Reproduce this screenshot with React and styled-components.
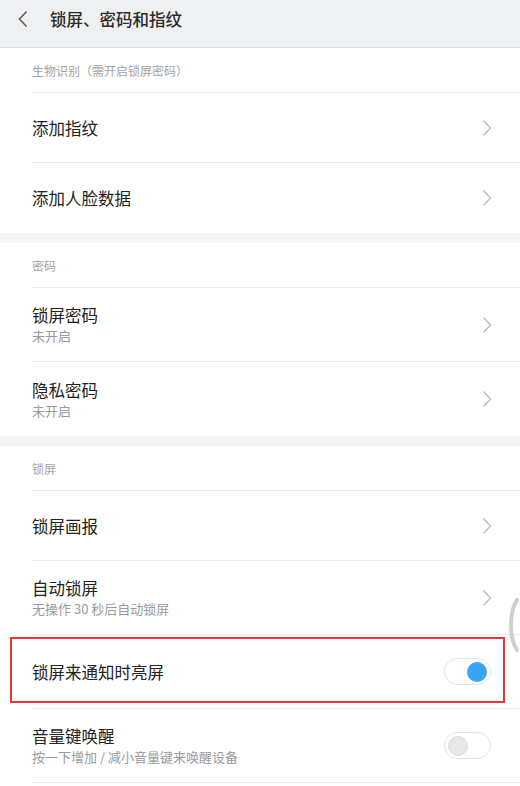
import React from 'react';
import styled, { createGlobalStyle } from 'styled-components';

const GlobalStyle = createGlobalStyle`
  html, body {
    margin: 0;
    padding: 0;
    background: #ffffff;
  }
  body {
    font-family: "Noto Sans CJK SC", "Noto Sans", sans-serif;
    -webkit-font-smoothing: antialiased;
  }
`;

const sections = [
  {
    title: '生物识别（需开启锁屏密码）',
    rows: [
      { label: '添加指纹', kind: 'link' },
      { label: '添加人脸数据', kind: 'link' },
    ],
  },
  {
    title: '密码',
    rows: [
      { label: '锁屏密码', sub: '未开启', kind: 'link' },
      { label: '隐私密码', sub: '未开启', kind: 'link' },
    ],
  },
  {
    title: '锁屏',
    rows: [
      { label: '锁屏画报', kind: 'link' },
      { label: '自动锁屏', sub: '无操作 30 秒后自动锁屏', kind: 'link' },
      { label: '锁屏来通知时亮屏', kind: 'toggle', on: true, tall: true, marked: true },
      { label: '音量键唤醒', sub: '按一下增加 / 减小音量键来唤醒设备', kind: 'toggle', on: false },
    ],
  },
];

const Page = styled.div`
  position: relative;
  width: 520px;
  height: 786px;
  overflow: hidden;
  background: #fff;
`;

const Header = styled.header`
  height: 47px;
  display: flex;
  align-items: center;
  background: #eef0f1;
  border-bottom: 1px solid #dedfe0;
`;

const BackButton = styled.div`
  width: 50px;
  height: 47px;
  display: flex;
  align-items: center;
  justify-content: center;
  padding-right: 4px;
  box-sizing: border-box;
  margin-top: -10px;
`;

const Title = styled.h1`
  margin: -10px 0 0;
  font-size: 16.5px;
  font-weight: 500;
  color: #2b2b2b;
`;

const Section = styled.section`
  & + & {
    border-top: 10px solid #f3f4f5;
  }
`;

const SectionTitle = styled.div`
  height: 45px;
  margin-left: 32px;
  display: flex;
  align-items: center;
  font-size: 12px;
  color: #a3a3a3;
  border-bottom: 1px solid #ececec;
  box-sizing: border-box;
`;

const Row = styled.div`
  position: relative;
  height: ${p => (p.$tall ? 74 : 70)}px;
  margin-left: 32px;
  padding-right: 26px;
  display: flex;
  align-items: center;
  box-sizing: border-box;
  border-bottom: ${p => (p.$last ? 'none' : '1px solid #ececec')};
`;

const Texts = styled.div`
  flex: 1;
  display: flex;
  flex-direction: column;
  justify-content: center;
`;

const Label = styled.div`
  font-size: 16.5px;
  color: #222;
  line-height: 22px;
`;

const Sub = styled.div`
  font-size: 13px;
  color: #9a9a9a;
  line-height: 18px;
  margin-top: 1px;
`;

const Chevron = styled.svg`
  width: 12px;
  height: 18px;
  margin-right: 1px;
`;

const Switch = styled.div`
  width: 47px;
  height: 27px;
  border-radius: 14px;
  border: 1px solid #e2e3e4;
  background: #fff;
  box-sizing: border-box;
  display: flex;
  align-items: center;
  justify-content: ${p => (p.$on ? 'flex-end' : 'flex-start')};
  padding: 0 3px;
  margin-right: 3px;
`;

const Knob = styled.div`
  width: 20px;
  height: 20px;
  border-radius: 50%;
  background: ${p => (p.$on ? '#3aa5f3' : '#e6e7e6')};
  border: ${p => (p.$on ? 'none' : '1px solid #dadbda')};
  box-sizing: border-box;
`;

const Highlight = styled.div`
  position: absolute;
  left: -22px;
  right: 15px;
  top: 2px;
  bottom: 5px;
  border: 2px solid #ee3434;
  pointer-events: none;
`;

const ScrollHint = styled.svg`
  position: absolute;
  right: 0;
  top: 598px;
  width: 14px;
  height: 54px;
`;

function RowItem({ row, last }) {
  return (
    <Row $tall={row.sub || row.tall} $last={last}>
      <Texts>
        <Label>{row.label}</Label>
        {row.sub && <Sub>{row.sub}</Sub>}
      </Texts>
      {row.kind === 'link' ? (
        <Chevron viewBox="0 0 12 18">
          <path d="M2.5 1.5 L9.5 9 L2.5 16.5" fill="none" stroke="#b9b9b9" strokeWidth="1.3" />
        </Chevron>
      ) : (
        <Switch $on={row.on}>
          <Knob $on={row.on} />
        </Switch>
      )}
      {row.marked && <Highlight />}
    </Row>
  );
}

export default function App() {
  return (
    <Page>
      <GlobalStyle />
      <Header>
        <BackButton>
          <svg width="12" height="18" viewBox="0 0 12 18">
            <path d="M9.5 1.5 L2.5 9 L9.5 16.5" fill="none" stroke="#5a5a5a" strokeWidth="1.5" />
          </svg>
        </BackButton>
        <Title>锁屏、密码和指纹</Title>
      </Header>
      {sections.map((s, i) => (
        <Section key={i}>
          <SectionTitle>{s.title}</SectionTitle>
          {s.rows.map((r, j) => (
            <RowItem key={j} row={r} last={j === s.rows.length - 1 && i < sections.length - 1} />
          ))}
        </Section>
      ))}
      <ScrollHint viewBox="0 0 14 54">
        <path d="M11 2 C3 14 3 40 11 52" fill="none" stroke="#cfcfcf" strokeWidth="4" strokeLinecap="round" />
      </ScrollHint>
    </Page>
  );
}
